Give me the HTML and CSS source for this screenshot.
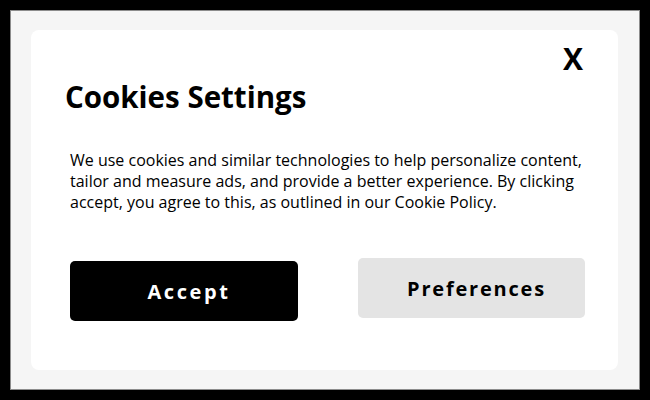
FILE: index.html
```html
<!DOCTYPE html>
<html lang="en">
<head>
  <meta charset="UTF-8" />
  <meta name="viewport" content="width=device-width, initial-scale=1.0"/>
  <title>Cookies Settings</title>
  <link rel="stylesheet" href="styles.css">
</head>
<body>
  <div class="frame">
    <div class="card">
      <div class="card-top">
        <button class="close" aria-label="Close">X</button>
      </div>
      <h1>Cookies Settings</h1>
      <p class="text">
        We use cookies and similar technologies to help personalize content,
        tailor and measure ads, and provide a better experience. By clicking
        accept, you agree to this, as outlined in our Cookie Policy.
      </p>
      <div class="actions">
        <button class="btn btn-accept">Accept</button>
        <button class="btn btn-prefs">Preferences</button>
      </div>
    </div>
  </div>
</body>
</html>
```

FILE: styles.css
```css
* {
  box-sizing: border-box;
}

body {
  margin: 0;
  background: #000;
  padding: 10px;
  font-family: "Open Sans", "Noto Sans", sans-serif;
  color: #000;
}

.frame {
  height: 380px;
  border: 1px solid #8c8c8c;
  background: #f5f5f5;
  padding: 19px 21px 19px 20px;
}

.card {
  height: 100%;
  background: #fff;
  border-radius: 8px;
  padding: 10px 33px 0 39px;
}

.card-top {
  display: flex;
  justify-content: flex-end;
  height: 38px;
}

.close {
  border: none;
  background: none;
  padding: 0;
  margin-right: 2px;
  font-family: inherit;
  font-size: 30px;
  font-weight: 700;
  line-height: 32px;
  cursor: pointer;
}

h1 {
  margin: 0 0 0 -5px;
  font-size: 29.5px;
  font-weight: 700;
  line-height: 38px;
}

.text {
  margin: 34px 0 0;
  font-size: 16px;
  line-height: 21px;
}

.actions {
  display: flex;
  justify-content: space-between;
  align-items: flex-start;
  margin-top: 45px;
}

.btn {
  width: 228px;
  height: 60px;
  border: none;
  border-radius: 5px;
  padding: 0 0 0 10px;
  font-family: inherit;
  font-size: 20px;
  font-weight: 700;
  letter-spacing: 1.8px;
  cursor: pointer;
}

.btn-accept {
  background: #000;
  color: #fff;
  margin-top: 3px;
  letter-spacing: 2.6px;
}

.btn-prefs {
  width: 227px;
  background: #e4e4e4;
  color: #000;
}
```
